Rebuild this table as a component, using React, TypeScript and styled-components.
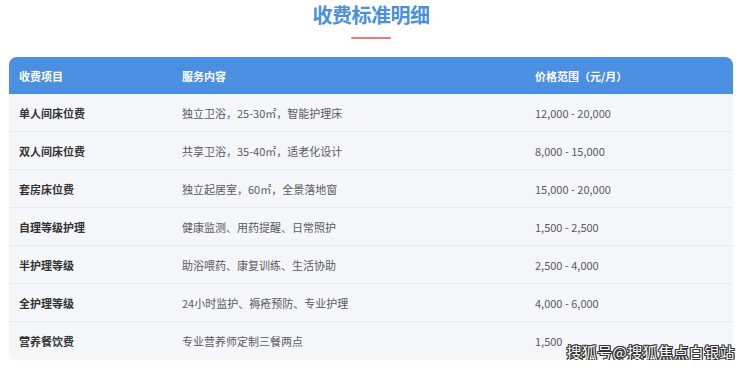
import React from "react";
import styled, { createGlobalStyle } from "styled-components";

const GlobalStyle = createGlobalStyle`
  html, body {
    margin: 0;
    padding: 0;
    background: #ffffff;
    font-family: "Noto Sans CJK SC", "Liberation Sans", sans-serif;
  }
`;

interface FeeRow {
  item: string;
  content: string;
  price: string;
}

const rows: FeeRow[] = [
  { item: "单人间床位费", content: "独立卫浴，25-30㎡，智能护理床", price: "12,000 - 20,000" },
  { item: "双人间床位费", content: "共享卫浴，35-40㎡，适老化设计", price: "8,000 - 15,000" },
  { item: "套房床位费", content: "独立起居室，60㎡，全景落地窗", price: "15,000 - 20,000" },
  { item: "自理等级护理", content: "健康监测、用药提醒、日常照护", price: "1,500 - 2,500" },
  { item: "半护理等级", content: "助浴喂药、康复训练、生活协助", price: "2,500 - 4,000" },
  { item: "全护理等级", content: "24小时监护、褥疮预防、专业护理", price: "4,000 - 6,000" },
  { item: "营养餐饮费", content: "专业营养师定制三餐两点", price: "1,500" },
];

export default function App(): JSX.Element {
  return (
    <>
      <GlobalStyle />
      <Page>
        <Title>收费标准明细</Title>
        <Accent />
        <TableWrap>
          <Table>
            <HeaderRow>
              <HeadCell>收费项目</HeadCell>
              <HeadCell>服务内容</HeadCell>
              <HeadCell>价格范围（元/月）</HeadCell>
            </HeaderRow>
            {rows.map((row, i) => (
              <BodyRow key={row.item} last={i === rows.length - 1}>
                <ItemCell>{row.item}</ItemCell>
                <TextCell>{row.content}</TextCell>
                <TextCell>{row.price}</TextCell>
              </BodyRow>
            ))}
          </Table>
          <Watermark>搜狐号@搜狐焦点白银站</Watermark>
        </TableWrap>
      </Page>
    </>
  );
}

const Page = styled.div`
  width: 724px;
  margin-left: 9px;
  padding-top: 2px;
  display: flex;
  flex-direction: column;
  align-items: center;
`;

const Title = styled.h1`
  margin: 0;
  font-size: 20px;
  line-height: 26px;
  font-weight: 700;
  color: #4a8fe0;
  letter-spacing: -0.5px;
`;

const Accent = styled.div`
  width: 40px;
  height: 2px;
  margin-top: 9px;
  background: #f07a74;
  border-radius: 1px;
`;

const TableWrap = styled.div`
  position: relative;
  align-self: stretch;
  margin-top: 18px;
`;

const Table = styled.div`
  border-radius: 8px;
  overflow: hidden;
  background: #f5f6fa;
`;

const Grid = styled.div`
  display: grid;
  grid-template-columns: 163px 353px 1fr;
  align-items: center;
`;

const HeaderRow = styled(Grid)`
  height: 37px;
  background: #4a8fe1;
`;

const HeadCell = styled.div`
  padding-left: 10px;
  font-size: 11px;
  font-weight: 700;
  color: #ffffff;
`;

const BodyRow = styled(Grid)<{ last?: boolean }>`
  height: 37px;
  border-bottom: 1px solid ${(p) => (p.last ? "transparent" : "#e7e9ee")};
`;

const ItemCell = styled.div`
  padding-left: 10px;
  font-size: 11px;
  font-weight: 700;
  color: #333333;
`;

const TextCell = styled.div`
  padding-left: 10px;
  font-size: 11px;
  color: #5a5a5a;
`;

const Watermark = styled.div`
  position: absolute;
  right: -2px;
  bottom: -2px;
  font-size: 15px;
  line-height: 20px;
  letter-spacing: 0.4px;
  white-space: nowrap;
  color: #ffffff;
  text-shadow:
    1px 0 0 #333,
    -1px 0 0 #333,
    0 1px 0 #333,
    0 -1px 0 #333,
    1px 1px 0 #333,
    -1px -1px 0 #333,
    1px -1px 0 #333,
    -1px 1px 0 #333;
`;
